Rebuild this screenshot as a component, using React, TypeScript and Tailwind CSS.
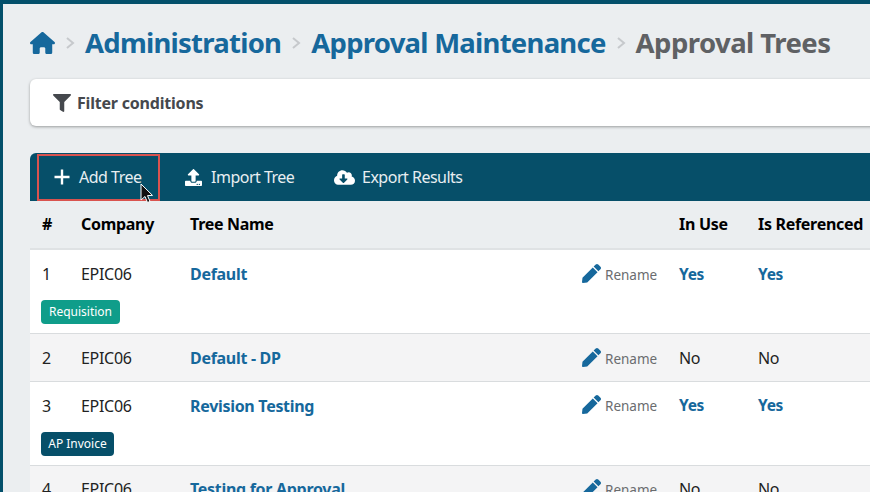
import { FaFilter, FaCloudDownloadAlt, FaPen, FaUpload } from "react-icons/fa";
import { FaHouse } from "react-icons/fa6";

const rows = [
  { n: "1", name: "Default", use: true, badge: "Requisition", badgeClass: "bg-[#0f9d8a] w-[79px] mt-[2px]", line: "h-[48px]", alt: false },
  { n: "2", name: "Default - DP", use: false, line: "h-[48px]", alt: true },
  { n: "3", name: "Revision Testing", use: true, badge: "AP Invoice", badgeClass: "bg-[#064f69] w-[73px] mt-[3px]", line: "h-[47px]", alt: false },
  { n: "4", name: "Testing for Approval", use: false, line: "h-[46px]", alt: true },
];

function Sep() {
  return (
    <svg className="mx-[10px] shrink-0" width="10" height="14" viewBox="0 0 10 14" fill="none">
      <path d="M2 2 L8 7 L2 12" stroke="#c6c9cc" strokeWidth="2" />
    </svg>
  );
}

function Flag({ v }: { v: boolean }) {
  return v ? (
    <span className="font-bold text-[#16689c] text-[15.5px] tracking-[-0.3px]">Yes</span>
  ) : (
    <span className="text-[#222] text-[16px]">No</span>
  );
}

export default function App() {
  return (
    <div className="w-[870px] h-[492px] overflow-hidden relative bg-[#ebeef0] border-t-4 border-l-[3px] border-[#03506b] font-['Noto_Sans',sans-serif] pl-[27px]">
      <div className="flex items-center h-[75px] pt-[3px] text-[27.5px] font-bold tracking-[-0.75px] whitespace-nowrap">
        <FaHouse className="text-[#16689c] text-[24px] w-[25px] shrink-0" />
        <Sep />
        <span className="text-[#16689c]">Administration</span>
        <Sep />
        <span className="text-[#16689c]">Approval Maintenance</span>
        <Sep />
        <span className="text-[#5f6164] tracking-[-0.55px]">Approval Trees</span>
      </div>

      <div className="w-[900px] h-[47px] bg-white rounded-l-md shadow-[0_1px_3px_rgba(0,0,0,0.35)] flex items-center pl-[23px] gap-[6px] text-[#45484d] font-bold text-[16px] tracking-[-0.2px]">
        <FaFilter className="text-[18px]" />
        <span>Filter conditions</span>
      </div>

      <div className="mt-[27px] w-[900px] h-[48px] bg-[#064f69] rounded-tl-md flex items-center text-[#e8eef1] text-[16px] tracking-[-0.5px] whitespace-nowrap">
        <div className="flex items-center w-[155px] pl-[23px] gap-[8px]">
          <svg width="18" height="18" viewBox="0 0 18 18" fill="none">
            <path d="M9 1.5 V16.5 M1.5 9 H16.5" stroke="#fff" strokeWidth="2.4" />
          </svg>
          <span>Add Tree</span>
        </div>
        <div className="flex items-center w-[149px] gap-[9px]">
          <FaUpload className="text-white text-[17px]" />
          <span>Import Tree</span>
        </div>
        <div className="flex items-center gap-[7px]">
          <FaCloudDownloadAlt className="text-white text-[21px]" />
          <span>Export Results</span>
        </div>
      </div>

      <div className="w-[900px] h-[49px] flex items-center pb-[2px] pl-[12px] border-b-2 border-[#dfe2e4] text-[16px] font-bold text-black tracking-[-0.3px] whitespace-nowrap">
        <div className="w-[39px]">#</div>
        <div className="w-[109px]">Company</div>
        <div className="w-[489px]">Tree Name</div>
        <div className="w-[79px]">In Use</div>
        <div>Is Referenced</div>
      </div>

      {rows.map((r) => (
        <div
          key={r.n}
          className={`w-[900px] border-b border-[#d9dcde] pl-[12px] whitespace-nowrap ${r.alt ? "bg-[#f4f4f5] h-[48px]" : "bg-white h-[84px]"}`}
        >
          <div className={`flex items-center text-[16px] text-[#222] tracking-[-0.3px] ${r.line}`}>
            <div className="w-[39px]">{r.n}</div>
            <div className="w-[109px]">EPIC06</div>
            <div className="w-[392px] font-bold text-[#16689c]">{r.name}</div>
            <div className="w-[97px] flex items-center gap-[4px] text-[#6a6c6f] text-[13.5px] tracking-normal">
              <FaPen className="text-[#16689c] text-[19px] -translate-y-[1px]" />
              <span className="translate-y-[1px]">Rename</span>
            </div>
            <div className="w-[79px]"><Flag v={r.use} /></div>
            <div><Flag v={r.use} /></div>
          </div>
          {r.badge && (
            <div className={`-ml-px h-[24px] rounded-[4px] flex items-center justify-center text-white text-[12px] ${r.badgeClass}`}>
              {r.badge}
            </div>
          )}
        </div>
      ))}

      <div className="absolute left-[34px] top-[150px] w-[123px] h-[47px] border-2 border-[#d9534f]" />
      <svg className="absolute left-[136px] top-[179px]" width="16" height="22" viewBox="0 0 16 22">
        <path d="M2 1 L2 17 L6 13.5 L8.5 19.5 L11 18.4 L8.5 12.6 L13.5 12.4 Z" fill="#111" stroke="#fff" strokeWidth="1" />
      </svg>
    </div>
  );
}
